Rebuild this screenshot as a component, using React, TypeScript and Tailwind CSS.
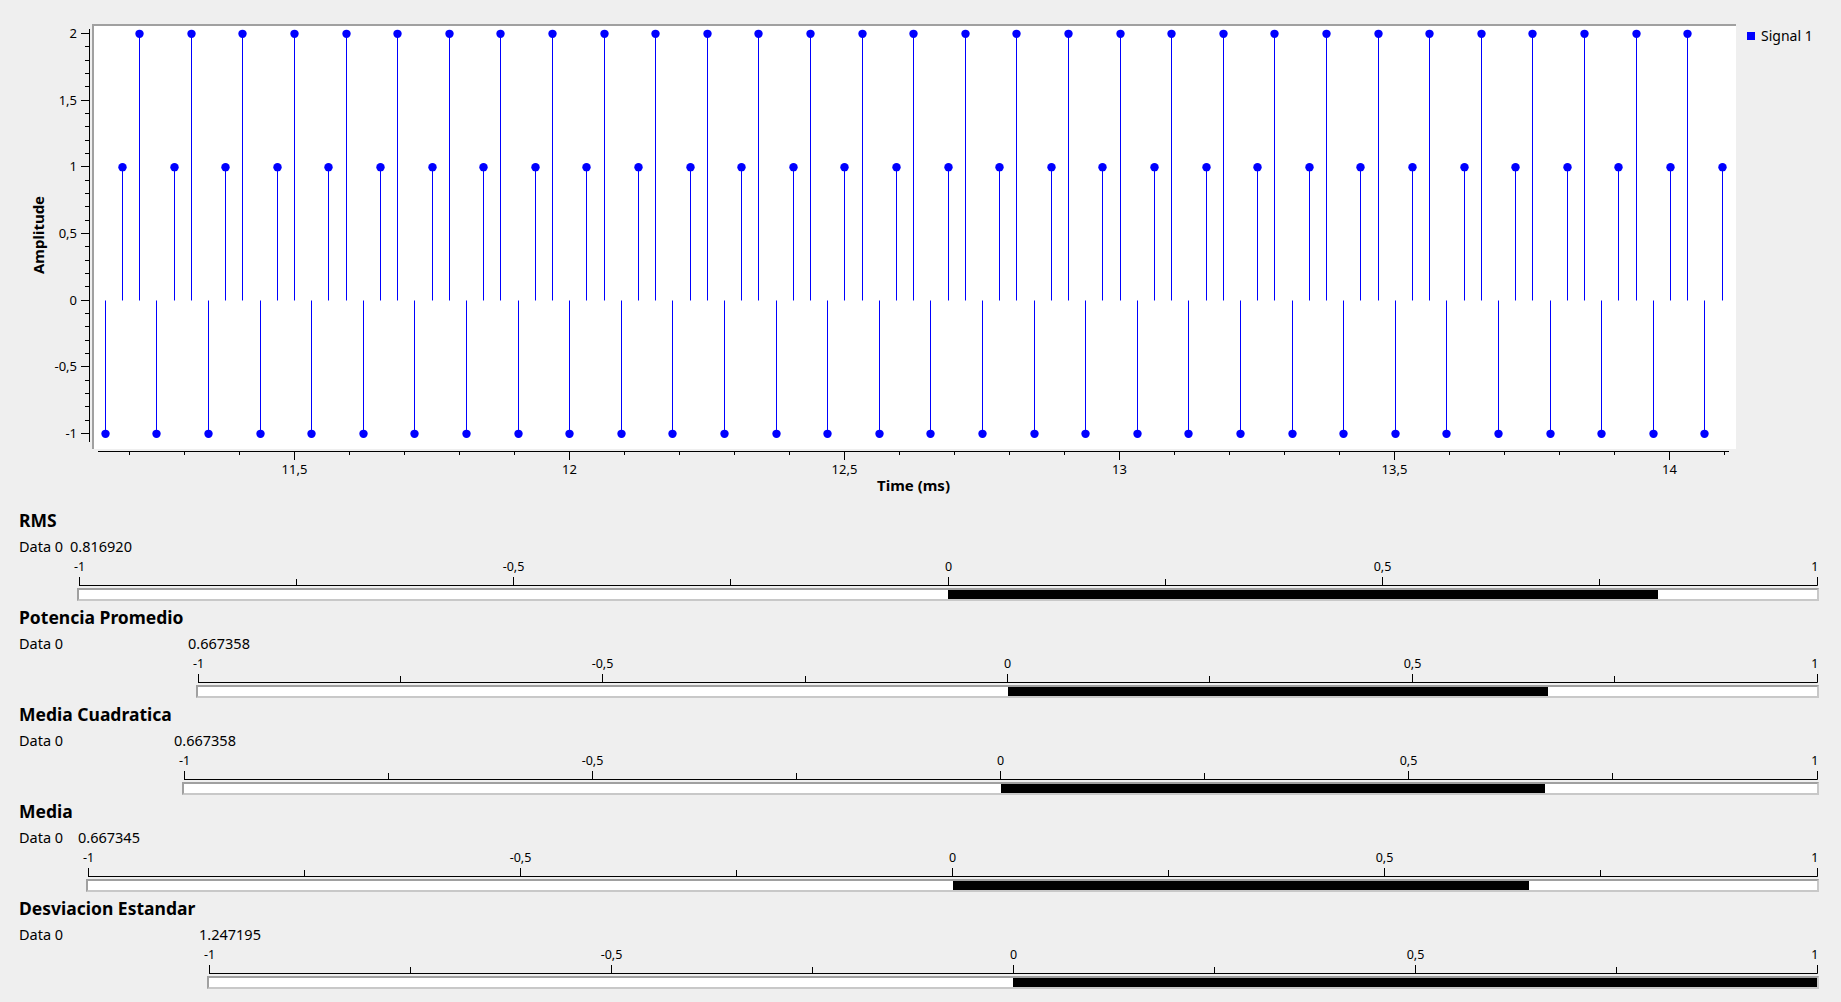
import React from 'react';

const BLUE = '#0000ff';

// 32 kHz samples, pattern -1, 1, 2 repeating
const SAMPLES = Array.from({ length: 95 }, (_, n) => ({
  x: Math.floor(105.3 + 17.2 * n) - 94 + 0.5,
  v: [-1, 1, 2][n % 3],
}));

const fmt = (v: number) => String(v).replace('.', ',');

const yPos = (v: number) => Math.floor(300.3 - 133.33 * v) + 0.5;
const xPos = (t: number) => Math.floor(294.3 + (t - 11.5) * 550) + 0.5 - 92;

const STATS = [
  { title: 'RMS', value: 0.81692, text: '0.816920', valCol: 'w-[70px]', ml: 'ml-[77px]', left: 77 },
  { title: 'Potencia Promedio', value: 0.667358, text: '0.667358', valCol: 'w-[188px]', ml: 'ml-[196px]', left: 196 },
  { title: 'Media Cuadratica', value: 0.667358, text: '0.667358', valCol: 'w-[174px]', ml: 'ml-[182px]', left: 182 },
  { title: 'Media', value: 0.667345, text: '0.667345', valCol: 'w-[78px]', ml: 'ml-[86px]', left: 86 },
  { title: 'Desviacion Estandar', value: 1.247195, text: '1.247195', valCol: 'w-[199px]', ml: 'ml-[207px]', left: 207 },
];

function YAxis() {
  const majors = [2, 1.5, 1, 0.5, 0, -0.5, -1];
  const minors: number[] = [];
  for (let k = -10; k <= 20; k++) if (k % 5 !== 0) minors.push(k / 10);
  return (
    <svg width={92} height={509} className="block shrink-0">
      <text
        x={38}
        y={235}
        transform="rotate(-90 38 235)"
        textAnchor="middle"
        dominantBaseline="central"
        className="text-[15px] font-bold"
      >
        Amplitude
      </text>
      <line x1={89.5} x2={89.5} y1={29} y2={442} stroke="#000" />
      {minors.map((v) => (
        <line key={v} x1={85} x2={89} y1={yPos(v)} y2={yPos(v)} stroke="#000" />
      ))}
      {majors.map((v) => (
        <g key={v}>
          <line x1={81} x2={89} y1={yPos(v)} y2={yPos(v)} stroke="#000" />
          <text x={77} y={yPos(v) - 1} textAnchor="end" dominantBaseline="central" className="text-[13px]">
            {fmt(v)}
          </text>
        </g>
      ))}
    </svg>
  );
}

function XAxis() {
  const ticks: { t: number; major: boolean }[] = [];
  for (let k = 112; k <= 141; k++) ticks.push({ t: k / 10, major: k % 5 === 0 });
  return (
    <svg width={1644} height={60} className="block">
      <line x1={6} x2={1637} y1={2.5} y2={2.5} stroke="#000" />
      {ticks.map(({ t, major }) => (
        <line key={t} x1={xPos(t)} x2={xPos(t)} y1={2.5} y2={major ? 11 : 6} stroke="#000" />
      ))}
      {ticks
        .filter((k) => k.major)
        .map(({ t }) => (
          <text key={t} x={xPos(t)} y={20} textAnchor="middle" dominantBaseline="central" className="text-[13px]">
            {fmt(t)}
          </text>
        ))}
      <text x={821.5} y={35.5} textAnchor="middle" dominantBaseline="central" className="text-[15px] font-bold">
        Time (ms)
      </text>
    </svg>
  );
}

function Canvas() {
  const y0 = 274.5;
  return (
    <svg width={1642} height={423} className="block">
      {SAMPLES.map((s, i) => {
        const y = y0 - 133.33 * s.v;
        return (
          <g key={i}>
            <line x1={s.x} x2={s.x} y1={y0} y2={y} stroke={BLUE} strokeWidth={1} />
            <circle cx={s.x} cy={y} r={4.2} fill={BLUE} />
          </g>
        );
      })}
    </svg>
  );
}

function Scale({ w }: { w: number }) {
  const inner = w - 4;
  const ticks = Array.from({ length: 9 }, (_, i) => Math.floor(2 + (i * inner) / 8) + 0.5);
  const labels = ['-1', '-0,5', '0', '0,5', '1'];
  return (
    <svg width={w} height={31} className="block overflow-visible">
      <line x1={2} x2={w - 1.5} y1={29.5} y2={29.5} stroke="#000" />
      {ticks.map((x, i) => (
        <line key={i} x1={x} x2={x} y1={i % 2 === 0 ? 21 : 23} y2={29.5} stroke="#000" />
      ))}
      {labels.map((l, j) => (
        <text
          key={l}
          x={j === 4 ? w - 0.5 : ticks[j * 2]}
          y={10.5}
          textAnchor={j === 4 ? 'end' : 'middle'}
          dominantBaseline="central"
          className="text-[12.5px]"
        >
          {l}
        </text>
      ))}
    </svg>
  );
}

function StatBlock({ s }: { s: (typeof STATS)[number] }) {
  return (
    <div className="h-[97px] flex flex-col">
      <div className="h-[24px] leading-[22px] pl-[19px] text-[17.5px] font-bold">{s.title}</div>
      <div className="mt-[3px] h-[20px] leading-[20px] flex text-[14.5px]">
        <span className={`${s.valCol} pl-[19px] shrink-0`}>Data 0</span>
        <span>{s.text}</span>
      </div>
      <div className={s.ml}>
        <Scale w={1819 - s.left} />
      </div>
      <div
        className={`${s.ml} mr-[22px] mt-[1px] h-[13px] flex bg-white border-2 border-t-[#a0a0a0] border-l-[#a0a0a0] border-b-[#c8c8c8] border-r-[#c8c8c8]`}
      >
        <div className="w-1/2 shrink-0" />
        <div className="h-full bg-black" style={{ width: `${Math.min(s.value, 1) * 50}%` }} />
      </div>
    </div>
  );
}

export default function App() {
  return (
    <div className="w-[1841px] h-[1002px] overflow-hidden bg-[#efefef] text-black font-['Noto_Sans',sans-serif]">
      <div className="flex h-[509px]">
        <YAxis />
        <div className="flex flex-col w-[1644px] shrink-0 pt-[24px]">
          <div className="h-[425px] bg-white border-t-2 border-l-2 border-[#a0a0a0]">
            <Canvas />
          </div>
          <XAxis />
        </div>
        <div className="flex items-center h-fit pl-[11px] pt-[29px]">
          <span className="w-[8px] h-[8px] bg-[#0000ff]" />
          <span className="ml-[6px] text-[14px] leading-[14px]">Signal 1</span>
        </div>
      </div>
      {STATS.map((s) => (
        <StatBlock key={s.title} s={s} />
      ))}
    </div>
  );
}
